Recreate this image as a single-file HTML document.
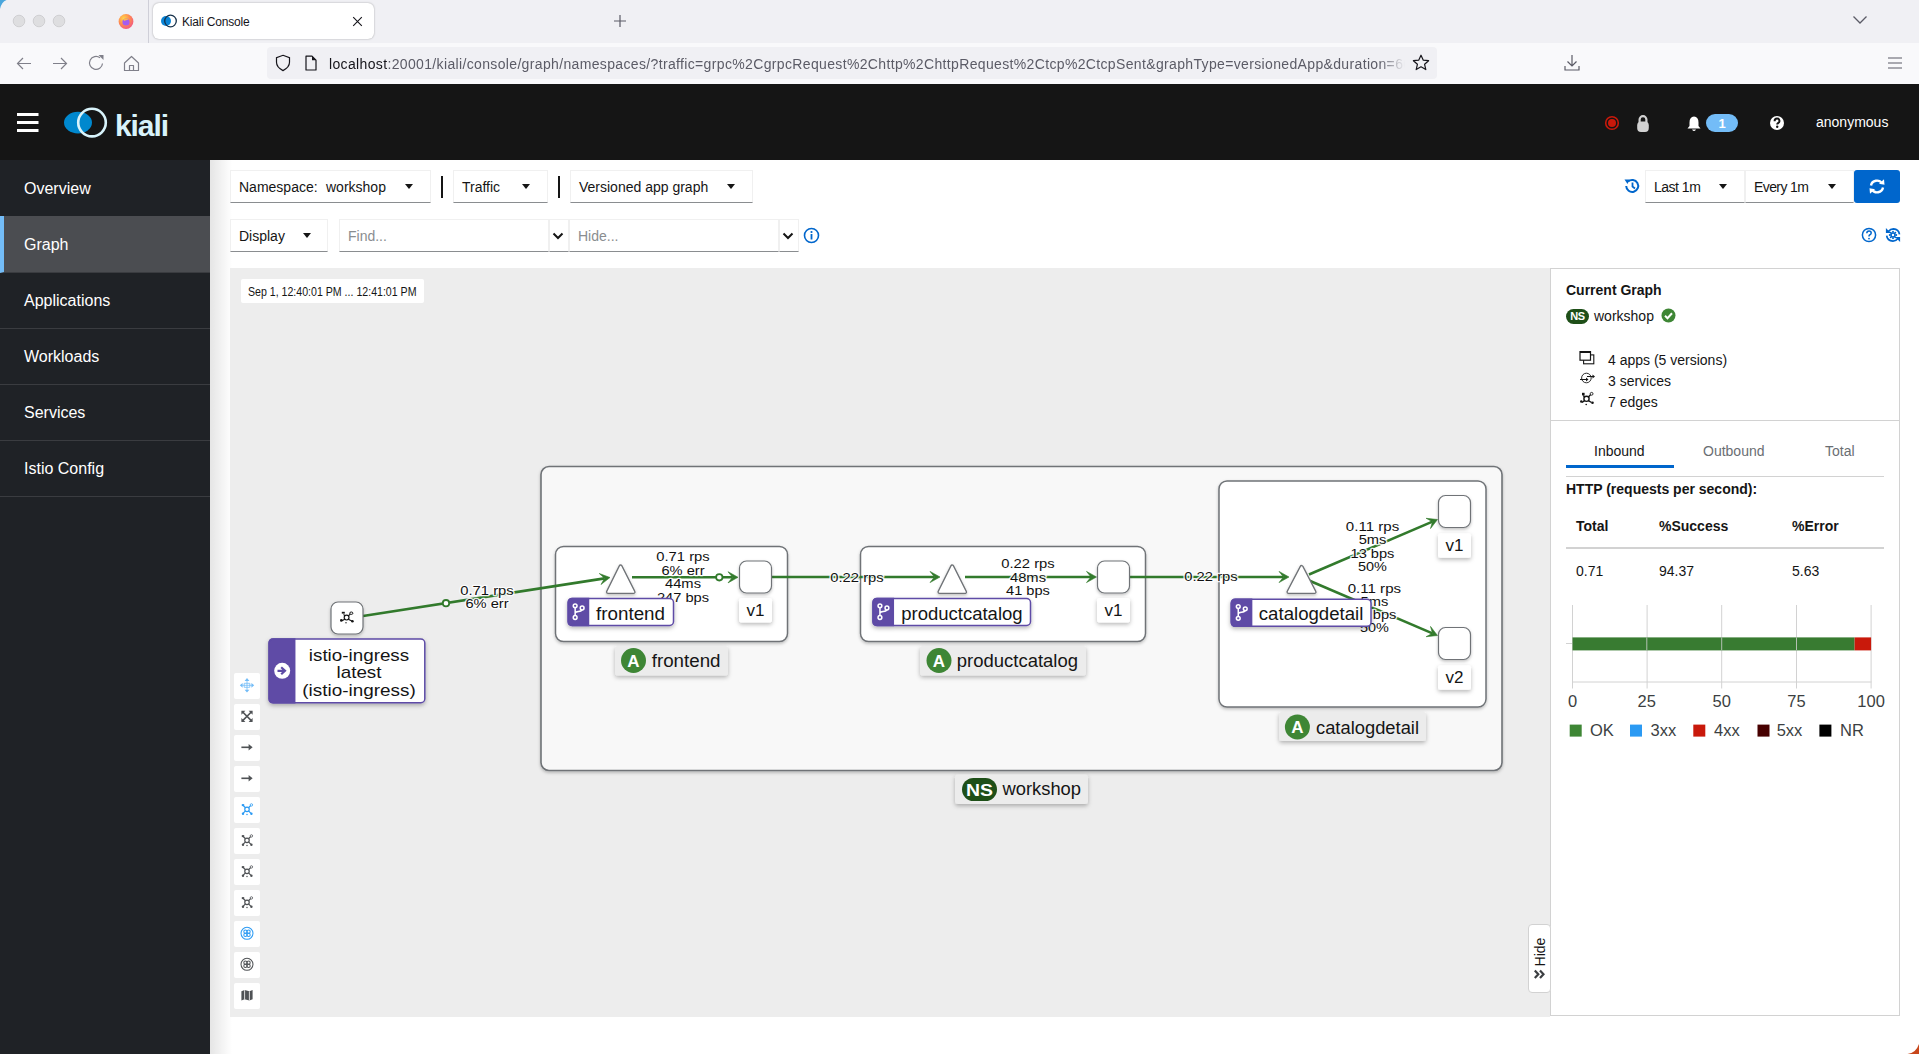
<!DOCTYPE html>
<html><head><meta charset="utf-8">
<style>
*{box-sizing:border-box;margin:0;padding:0}
html,body{width:1919px;height:1054px;overflow:hidden;background:#fff;font-family:"Liberation Sans",sans-serif;color:#151515}
.a{position:absolute}
#tabbar{left:0;top:0;width:1919px;height:43px;background:#f0f0f4}
#navbar{left:0;top:43px;width:1919px;height:41px;background:#f9f9fb}
#mast{left:0;top:84px;width:1919px;height:76px;background:#151515}
#side{left:0;top:160px;width:210px;height:894px;background:#1f2226}
.nav{position:absolute;left:0;width:210px;height:57px;border-bottom:1px solid #3a3c40;color:#fff;font-size:16px;padding-left:24px;line-height:58px}
#main{left:210px;top:160px;width:1709px;height:894px;background:#fff}
.sel{position:absolute;height:33px;background:#fff;border:1px solid #f0f0f0;border-bottom:1px solid #8a8d90;font-size:14px;color:#151515;line-height:33px;padding-left:8px}
.caret{position:absolute;width:0;height:0;border-left:4.5px solid transparent;border-right:4.5px solid transparent;border-top:5px solid #151515;margin-top:-1px;margin-left:0.5px}
.vsep{position:absolute;width:2px;background:#151515}
</style></head><body>
<!-- browser chrome -->
<div id="tabbar" class="a">
  <svg class="a" style="left:0;top:0" width="160" height="43">
    <circle cx="19" cy="21" r="5.8" fill="#dedee0" stroke="#c9c9cc" stroke-width="0.8"/>
    <circle cx="39" cy="21" r="5.8" fill="#dedee0" stroke="#c9c9cc" stroke-width="0.8"/>
    <circle cx="59" cy="21" r="5.8" fill="#dedee0" stroke="#c9c9cc" stroke-width="0.8"/>
    <defs><radialGradient id="ffg" cx="0.35" cy="0.3" r="0.8"><stop offset="0" stop-color="#ffd84a"/><stop offset="0.5" stop-color="#ff8a50"/><stop offset="1" stop-color="#f0508a"/></radialGradient></defs>
    <circle cx="126" cy="21.5" r="7.4" fill="url(#ffg)"/>
    <circle cx="126" cy="22" r="3.6" fill="#a55cf0"/>
    <path d="M123 19.5Q126 17.5 128.5 20Q126 19.5 124.5 21Z" fill="#ffb84a"/>
    <line x1="148.5" y1="0" x2="148.5" y2="43" stroke="#cfcfd8" stroke-width="1"/>
  </svg>
  <div class="a" style="left:153px;top:3px;width:221px;height:36px;background:#fff;border-radius:6px;box-shadow:0 0 2px rgba(0,0,0,.35)"></div>
  <svg class="a" style="left:160px;top:13px" width="18" height="16">
    <circle cx="6" cy="8" r="5" fill="#0a84d6"/>
    <circle cx="10.5" cy="8" r="5.8" fill="none" stroke="#16314a" stroke-width="1.3"/>
  </svg>
  <div class="a" style="left:182px;top:15px;font-size:12px;color:#15141a;letter-spacing:-0.2px">Kiali Console</div>
  <svg class="a" style="left:352px;top:16px" width="12" height="12"><path d="M1.2 1.2L9.8 9.8M9.8 1.2L1.2 9.8" stroke="#15141a" stroke-width="1.1"/></svg>
  <svg class="a" style="left:613px;top:14px" width="14" height="14"><path d="M7 1V13M1 7H13" stroke="#5b5b66" stroke-width="1.2"/></svg>
  <svg class="a" style="left:1852px;top:15px" width="16" height="10"><path d="M1.5 1.5L8 8L14.5 1.5" fill="none" stroke="#5b5b66" stroke-width="1.3"/></svg>
</div>
<div id="navbar" class="a">
  <svg class="a" style="left:0;top:0" width="160" height="41">
    <path d="M17.5 20.5H31M23 15L17.5 20.5L23 26" fill="none" stroke="#80808a" stroke-width="1.2"/>
    <path d="M53 20.5H66.5M61 15L66.5 20.5L61 26" fill="none" stroke="#80808a" stroke-width="1.2"/>
    <path d="M102.5 20.5A6.5 6.5 0 1 1 100 14.8" fill="none" stroke="#80808a" stroke-width="1.2"/>
    <path d="M98.5 12L103.5 12L103.5 17Z" fill="#80808a"/>
    <path d="M124.5 20L131.5 13.5L138.5 20V27.5H124.5Z M129.5 27.5V22.5H133.5V27.5" fill="none" stroke="#80808a" stroke-width="1.2" stroke-linejoin="round"/>
  </svg>
  <div class="a" style="left:267px;top:4px;width:1170px;height:32px;background:#f0f0f4;border-radius:4px"></div>
  <svg class="a" style="left:272px;top:10px" width="50" height="22">
    <path d="M11 2.3L17.5 4.6V9.3Q17.5 14.3 11 17.6Q4.5 14.3 4.5 9.3V4.6Z" fill="none" stroke="#15141a" stroke-width="1.2"/>
    <path d="M34 3.2H40L44 7.2V17H34Z" fill="none" stroke="#15141a" stroke-width="1.2" stroke-linejoin="round"/>
    <path d="M40 3.2V7.2H44Z" fill="#15141a"/>
  </svg>
  <div class="a" id="url" style="left:329px;top:13px;font-size:14px;letter-spacing:0.35px;color:#5b5b66;white-space:nowrap;width:1076px;overflow:hidden;-webkit-mask-image:linear-gradient(to right,#000 1050px,transparent 1076px)"><span style="color:#15141a">localhost</span>:20001/kiali/console/graph/namespaces/?traffic=grpc%2CgrpcRequest%2Chttp%2ChttpRequest%2Ctcp%2CtcpSent&amp;graphType=versionedApp&amp;duration=60</div>
  <svg class="a" style="left:1411px;top:10px" width="20" height="20"><path d="M10 2.2L12.3 7.2L17.6 7.7L13.6 11.3L14.8 16.6L10 13.8L5.2 16.6L6.4 11.3L2.4 7.7L7.7 7.2Z" fill="none" stroke="#15141a" stroke-width="1.2" stroke-linejoin="round"/></svg>
  <svg class="a" style="left:1563px;top:10px" width="18" height="20"><path d="M9 2V13M4.5 8.5L9 13L13.5 8.5M2 13V17H16V13" fill="none" stroke="#5b5b66" stroke-width="1.2"/></svg>
  <svg class="a" style="left:1887px;top:13px" width="16" height="14"><path d="M1 2H15M1 7H15M1 12H15" stroke="#5b5b66" stroke-width="1.2"/></svg>
</div>
<!-- masthead -->
<div id="mast" class="a">
  <svg class="a" style="left:17px;top:29px" width="22" height="20"><rect x="0" y="0" width="21.5" height="3" fill="#fff"/><rect x="0" y="8" width="21.5" height="3" fill="#fff"/><rect x="0" y="16" width="21.5" height="3" fill="#fff"/></svg>
  <svg class="a" style="left:62px;top:22px" width="50" height="34">
    <ellipse cx="16" cy="16.6" rx="14" ry="10.8" fill="#0088ce"/>
    <circle cx="30" cy="16.6" r="13.8" fill="none" stroke="#d8f3fb" stroke-width="2.6"/>
  </svg>
  <div class="a" style="left:115px;top:25px;font-size:30px;font-weight:bold;color:#d8f3fb;letter-spacing:-1.1px">kiali</div>
</div>
<!-- sidebar -->
<div id="side" class="a">
  <div class="nav" style="top:0">Overview</div>
  <div class="nav" style="top:56px;background:#4b4d51;border-left:4px solid #73bcf7;padding-left:20px">Graph</div>
  <div class="nav" style="top:112px">Applications</div>
  <div class="nav" style="top:168px">Workloads</div>
  <div class="nav" style="top:224px">Services</div>
  <div class="nav" style="top:280px">Istio Config</div>
</div>
<div id="main" class="a">
  <div class="a" style="left:0;top:0;width:22px;height:894px;background:linear-gradient(to right,rgba(0,0,0,.10),rgba(0,0,0,0))"></div>
</div>
<!--GRAPH--><svg class="a" style="left:0;top:0" width="1919" height="1054" viewBox="0 0 1919 1054">
<defs>
<filter id="sh" x="-20%" y="-20%" width="140%" height="160%"><feDropShadow dx="0" dy="2" stdDeviation="2" flood-color="#000" flood-opacity="0.28"/></filter>
<filter id="sh2" x="-20%" y="-20%" width="140%" height="160%"><feDropShadow dx="0" dy="1.5" stdDeviation="1.5" flood-color="#000" flood-opacity="0.25"/></filter>
</defs>
<rect x="230" y="268" width="1320" height="749" fill="#ededed"/>
<rect x="241" y="279" width="183" height="24" rx="2" fill="#fff"/>
<text x="248" y="296" font-size="12" textLength="168.5" lengthAdjust="spacingAndGlyphs" fill="#151515">Sep 1, 12:40:01 PM ... 12:41:01 PM</text>
<rect x="541" y="466.5" width="961" height="304" rx="8" fill="#f8f8f8" stroke="#6f7377" stroke-width="1.6" filter="url(#sh2)"/>
<rect x="955" y="774.5" width="133" height="29.5" rx="3" fill="#ececec" filter="url(#sh)"/>
<rect x="962" y="778" width="35" height="23" rx="11.5" fill="#1e4f18"/>
<text x="979.5" y="795.5" font-size="16" font-weight="bold" fill="#fff" text-anchor="middle" textLength="27" lengthAdjust="spacingAndGlyphs">NS</text>
<text x="1002.5" y="795" font-size="17.5" fill="#151515" textLength="78.5" lengthAdjust="spacingAndGlyphs">workshop</text>
<rect x="555.5" y="546.5" width="232" height="95" rx="8" fill="#fff" stroke="#6f7377" stroke-width="1.5" filter="url(#sh2)"/>
<rect x="860.5" y="546.5" width="285" height="95" rx="8" fill="#fff" stroke="#6f7377" stroke-width="1.5" filter="url(#sh2)"/>
<rect x="1219" y="481" width="267" height="226" rx="8" fill="#fff" stroke="#6f7377" stroke-width="1.5" filter="url(#sh2)"/>
<rect x="615" y="646" width="113" height="29.5" rx="3" fill="#ececec" filter="url(#sh)"/>
<circle cx="633.5" cy="660.5" r="12.5" fill="#3e8635"/>
<text x="633.5" y="666.5" font-size="17" font-weight="bold" fill="#fff" text-anchor="middle">A</text>
<text x="651.7" y="667.0" font-size="17.5" fill="#151515" textLength="68.8" lengthAdjust="spacingAndGlyphs">frontend</text>
<rect x="920" y="646" width="166" height="29.5" rx="3" fill="#ececec" filter="url(#sh)"/>
<circle cx="939" cy="660.5" r="12.5" fill="#3e8635"/>
<text x="939" y="666.5" font-size="17" font-weight="bold" fill="#fff" text-anchor="middle">A</text>
<text x="956.8" y="667.0" font-size="17.5" fill="#151515" textLength="121.2" lengthAdjust="spacingAndGlyphs">productcatalog</text>
<rect x="1279" y="712" width="147" height="29" rx="3" fill="#ececec" filter="url(#sh)"/>
<circle cx="1297.4" cy="727" r="12.5" fill="#3e8635"/>
<text x="1297.4" y="733" font-size="17" font-weight="bold" fill="#fff" text-anchor="middle">A</text>
<text x="1316" y="733.5" font-size="17.5" fill="#151515" textLength="103" lengthAdjust="spacingAndGlyphs">catalogdetail</text>
<line x1="363" y1="616" x2="604.57" y2="578.35" stroke="#327a2c" stroke-width="2.6"/>
<path d="M610.00 577.50 L600.98 584.57 L604.57 578.35 L599.26 573.51Z" fill="#327a2c" stroke="#327a2c" stroke-width="0.6" stroke-linejoin="miter"/>
<circle cx="446" cy="603.2" r="3.2" fill="#fff" stroke="#327a2c" stroke-width="1.8"/>
<line x1="632" y1="577.3" x2="732.5" y2="577.3" stroke="#327a2c" stroke-width="2.6"/>
<path d="M738.00 577.30 L728.00 582.90 L732.50 577.30 L728.00 571.70Z" fill="#327a2c" stroke="#327a2c" stroke-width="0.6" stroke-linejoin="miter"/>
<circle cx="719.3" cy="577.3" r="3.2" fill="#fff" stroke="#327a2c" stroke-width="1.8"/>
<line x1="772" y1="577" x2="934.5" y2="577.0" stroke="#327a2c" stroke-width="2.6"/>
<path d="M940.00 577.00 L930.00 582.60 L934.50 577.00 L930.00 571.40Z" fill="#327a2c" stroke="#327a2c" stroke-width="0.6" stroke-linejoin="miter"/>
<line x1="965" y1="577" x2="1091.0" y2="577.0" stroke="#327a2c" stroke-width="2.6"/>
<path d="M1096.50 577.00 L1086.50 582.60 L1091.00 577.00 L1086.50 571.40Z" fill="#327a2c" stroke="#327a2c" stroke-width="0.6" stroke-linejoin="miter"/>
<line x1="1130" y1="577" x2="1283.5" y2="577.0" stroke="#327a2c" stroke-width="2.6"/>
<path d="M1289.00 577.00 L1279.00 582.60 L1283.50 577.00 L1279.00 571.40Z" fill="#327a2c" stroke="#327a2c" stroke-width="0.6" stroke-linejoin="miter"/>
<line x1="1309" y1="574.5" x2="1432.44" y2="521.66" stroke="#327a2c" stroke-width="2.6"/>
<path d="M1437.50 519.50 L1430.51 528.58 L1432.44 521.66 L1426.10 518.29Z" fill="#327a2c" stroke="#327a2c" stroke-width="0.6" stroke-linejoin="miter"/>
<line x1="1309" y1="580.5" x2="1432.44" y2="633.34" stroke="#327a2c" stroke-width="2.6"/>
<path d="M1437.50 635.50 L1426.10 636.71 L1432.44 633.34 L1430.51 626.42Z" fill="#327a2c" stroke="#327a2c" stroke-width="0.6" stroke-linejoin="miter"/>
<path d="M620.6 566.5 L633.5 592 L608 592 Z" fill="#fff" stroke="#6f7377" stroke-width="4.2" stroke-linejoin="round" filter="url(#sh2)"/>
<path d="M620.6 566.5 L633.5 592 L608 592 Z" fill="#fff" stroke="#fff" stroke-width="1.6" stroke-linejoin="round"/>
<path d="M952.2 566.5 L965 592 L939.5 592 Z" fill="#fff" stroke="#6f7377" stroke-width="4.2" stroke-linejoin="round" filter="url(#sh2)"/>
<path d="M952.2 566.5 L965 592 L939.5 592 Z" fill="#fff" stroke="#fff" stroke-width="1.6" stroke-linejoin="round"/>
<path d="M1301.6 567 L1314.5 592 L1288.5 592 Z" fill="#fff" stroke="#6f7377" stroke-width="4.2" stroke-linejoin="round" filter="url(#sh2)"/>
<path d="M1301.6 567 L1314.5 592 L1288.5 592 Z" fill="#fff" stroke="#fff" stroke-width="1.6" stroke-linejoin="round"/>
<rect x="739.5" y="561" width="32" height="32" rx="7" fill="#fff" stroke="#6f7377" stroke-width="1.2" filter="url(#sh2)"/>
<rect x="1097.5" y="561" width="32" height="32" rx="7" fill="#fff" stroke="#6f7377" stroke-width="1.2" filter="url(#sh2)"/>
<rect x="1438.5" y="495.5" width="32" height="32" rx="7" fill="#fff" stroke="#6f7377" stroke-width="1.2" filter="url(#sh2)"/>
<rect x="1438.5" y="627.5" width="32" height="32" rx="7" fill="#fff" stroke="#6f7377" stroke-width="1.2" filter="url(#sh2)"/>
<rect x="331" y="602" width="32" height="32" rx="7" fill="#fff" stroke="#6f7377" stroke-width="1.2" filter="url(#sh2)"/>
<rect x="739" y="598" width="33" height="24.5" rx="2.5" fill="#fff" filter="url(#sh)"/>
<text x="755.5" y="616" font-size="17" fill="#151515" text-anchor="middle" textLength="18" lengthAdjust="spacingAndGlyphs">v1</text>
<rect x="1097" y="598" width="33" height="24.5" rx="2.5" fill="#fff" filter="url(#sh)"/>
<text x="1113.5" y="616" font-size="17" fill="#151515" text-anchor="middle" textLength="18" lengthAdjust="spacingAndGlyphs">v1</text>
<rect x="1438" y="533.3" width="33" height="24.5" rx="2.5" fill="#fff" filter="url(#sh)"/>
<text x="1454.5" y="551.3" font-size="17" fill="#151515" text-anchor="middle" textLength="18" lengthAdjust="spacingAndGlyphs">v1</text>
<rect x="1438" y="665.3" width="33" height="24.5" rx="2.5" fill="#fff" filter="url(#sh)"/>
<text x="1454.5" y="683.3" font-size="17" fill="#151515" text-anchor="middle" textLength="18" lengthAdjust="spacingAndGlyphs">v2</text>
<text x="487" y="594.5" font-size="13" fill="#111" stroke="rgba(255,255,255,0.85)" stroke-width="2.6" paint-order="stroke" stroke-linejoin="round" text-anchor="middle" textLength="53.4" lengthAdjust="spacingAndGlyphs">0.71 rps</text>
<text x="487" y="608.2" font-size="13" fill="#111" stroke="rgba(255,255,255,0.85)" stroke-width="2.6" paint-order="stroke" stroke-linejoin="round" text-anchor="middle" textLength="43.2" lengthAdjust="spacingAndGlyphs">6% err</text>
<text x="683" y="561.0" font-size="13" fill="#111" stroke="rgba(255,255,255,0.85)" stroke-width="2.6" paint-order="stroke" stroke-linejoin="round" text-anchor="middle" textLength="53.4" lengthAdjust="spacingAndGlyphs">0.71 rps</text>
<text x="683" y="574.6" font-size="13" fill="#111" stroke="rgba(255,255,255,0.85)" stroke-width="2.6" paint-order="stroke" stroke-linejoin="round" text-anchor="middle" textLength="43.2" lengthAdjust="spacingAndGlyphs">6% err</text>
<text x="683" y="588.1" font-size="13" fill="#111" stroke="rgba(255,255,255,0.85)" stroke-width="2.6" paint-order="stroke" stroke-linejoin="round" text-anchor="middle" textLength="36" lengthAdjust="spacingAndGlyphs">44ms</text>
<text x="683" y="601.6" font-size="13" fill="#111" stroke="rgba(255,255,255,0.85)" stroke-width="2.6" paint-order="stroke" stroke-linejoin="round" text-anchor="middle" textLength="52.2" lengthAdjust="spacingAndGlyphs">247 bps</text>
<text x="857" y="581.6" font-size="13" fill="#111" stroke="rgba(255,255,255,0.85)" stroke-width="2.6" paint-order="stroke" stroke-linejoin="round" text-anchor="middle" textLength="53.4" lengthAdjust="spacingAndGlyphs">0.22 rps</text>
<text x="1028" y="568.1" font-size="13" fill="#111" stroke="rgba(255,255,255,0.85)" stroke-width="2.6" paint-order="stroke" stroke-linejoin="round" text-anchor="middle" textLength="53.4" lengthAdjust="spacingAndGlyphs">0.22 rps</text>
<text x="1028" y="581.6" font-size="13" fill="#111" stroke="rgba(255,255,255,0.85)" stroke-width="2.6" paint-order="stroke" stroke-linejoin="round" text-anchor="middle" textLength="36" lengthAdjust="spacingAndGlyphs">48ms</text>
<text x="1028" y="595.1" font-size="13" fill="#111" stroke="rgba(255,255,255,0.85)" stroke-width="2.6" paint-order="stroke" stroke-linejoin="round" text-anchor="middle" textLength="43.9" lengthAdjust="spacingAndGlyphs">41 bps</text>
<text x="1211" y="581.3000000000001" font-size="13" fill="#111" stroke="rgba(255,255,255,0.85)" stroke-width="2.6" paint-order="stroke" stroke-linejoin="round" text-anchor="middle" textLength="53.4" lengthAdjust="spacingAndGlyphs">0.22 rps</text>
<text x="1372.5" y="531.0" font-size="13" fill="#111" stroke="rgba(255,255,255,0.85)" stroke-width="2.6" paint-order="stroke" stroke-linejoin="round" text-anchor="middle" textLength="53.4" lengthAdjust="spacingAndGlyphs">0.11 rps</text>
<text x="1372.5" y="544.1" font-size="13" fill="#111" stroke="rgba(255,255,255,0.85)" stroke-width="2.6" paint-order="stroke" stroke-linejoin="round" text-anchor="middle" textLength="27.7" lengthAdjust="spacingAndGlyphs">5ms</text>
<text x="1372.5" y="557.6" font-size="13" fill="#111" stroke="rgba(255,255,255,0.85)" stroke-width="2.6" paint-order="stroke" stroke-linejoin="round" text-anchor="middle" textLength="43.9" lengthAdjust="spacingAndGlyphs">13 bps</text>
<text x="1372.5" y="571.1" font-size="13" fill="#111" stroke="rgba(255,255,255,0.85)" stroke-width="2.6" paint-order="stroke" stroke-linejoin="round" text-anchor="middle" textLength="28.9" lengthAdjust="spacingAndGlyphs">50%</text>
<text x="1374.4" y="593.3000000000001" font-size="13" fill="#111" stroke="rgba(255,255,255,0.85)" stroke-width="2.6" paint-order="stroke" stroke-linejoin="round" text-anchor="middle" textLength="53.4" lengthAdjust="spacingAndGlyphs">0.11 rps</text>
<text x="1374.4" y="606.1" font-size="13" fill="#111" stroke="rgba(255,255,255,0.85)" stroke-width="2.6" paint-order="stroke" stroke-linejoin="round" text-anchor="middle" textLength="27.7" lengthAdjust="spacingAndGlyphs">5ms</text>
<text x="1374.4" y="619.3000000000001" font-size="13" fill="#111" stroke="rgba(255,255,255,0.85)" stroke-width="2.6" paint-order="stroke" stroke-linejoin="round" text-anchor="middle" textLength="43.9" lengthAdjust="spacingAndGlyphs">13 bps</text>
<text x="1374.4" y="632.1" font-size="13" fill="#111" stroke="rgba(255,255,255,0.85)" stroke-width="2.6" paint-order="stroke" stroke-linejoin="round" text-anchor="middle" textLength="28.9" lengthAdjust="spacingAndGlyphs">50%</text>
<g filter="url(#sh)"><rect x="568.2" y="598.5" width="105.29999999999995" height="27.0" rx="4" fill="#fff" stroke="#5e4ba6" stroke-width="1.5"/>
<path d="M572.2 598.5 H588.5 V625.5 H572.2 Q568.2 625.5 568.2 621.5 V602.5 Q568.2 598.5 572.2 598.5Z" fill="#5e4ba6" stroke="#5e4ba6" stroke-width="1.5"/></g>
<g fill="none" stroke="#fff" stroke-width="1.5"><circle cx="575.15" cy="605.8" r="1.9"/><circle cx="575.15" cy="617.5" r="1.9"/><circle cx="582.15" cy="608.0" r="1.9"/><path d="M575.15 607.7 V615.6 M575.15 613.2 Q575.35 612.0 578.35 611.5 Q581.75 611.0 581.95 609.8"/></g>
<text x="596.1" y="619.5" font-size="17.5" fill="#151515" textLength="68.9" lengthAdjust="spacingAndGlyphs">frontend</text>
<g filter="url(#sh)"><rect x="873" y="598.5" width="157.5" height="27.0" rx="4" fill="#fff" stroke="#5e4ba6" stroke-width="1.5"/>
<path d="M877 598.5 H893.3 V625.5 H877 Q873 625.5 873 621.5 V602.5 Q873 598.5 877 598.5Z" fill="#5e4ba6" stroke="#5e4ba6" stroke-width="1.5"/></g>
<g fill="none" stroke="#fff" stroke-width="1.5"><circle cx="879.9499999999999" cy="605.8" r="1.9"/><circle cx="879.9499999999999" cy="617.5" r="1.9"/><circle cx="886.9499999999999" cy="608.0" r="1.9"/><path d="M879.9499999999999 607.7 V615.6 M879.9499999999999 613.2 Q880.15 612.0 883.15 611.5 Q886.55 611.0 886.75 609.8"/></g>
<text x="901.2" y="619.5" font-size="17.5" fill="#151515" textLength="121.4" lengthAdjust="spacingAndGlyphs">productcatalog</text>
<g filter="url(#sh)"><rect x="1231.3" y="599.3" width="139.70000000000005" height="27.0" rx="4" fill="#fff" stroke="#5e4ba6" stroke-width="1.5"/>
<path d="M1235.3 599.3 H1251.6 V626.3 H1235.3 Q1231.3 626.3 1231.3 622.3 V603.3 Q1231.3 599.3 1235.3 599.3Z" fill="#5e4ba6" stroke="#5e4ba6" stroke-width="1.5"/></g>
<g fill="none" stroke="#fff" stroke-width="1.5"><circle cx="1238.25" cy="606.5999999999999" r="1.9"/><circle cx="1238.25" cy="618.3" r="1.9"/><circle cx="1245.25" cy="608.8" r="1.9"/><path d="M1238.25 608.5 V616.4 M1238.25 614.0 Q1238.45 612.8 1241.45 612.3 Q1244.8500000000001 611.8 1245.05 610.5999999999999"/></g>
<text x="1258.8" y="620.3" font-size="17.5" fill="#151515" textLength="104.6" lengthAdjust="spacingAndGlyphs">catalogdetail</text>
<g filter="url(#sh)"><rect x="269.1" y="639.1" width="155.7" height="63.60000000000002" rx="4" fill="#fff" stroke="#5e4ba6" stroke-width="1.5"/>
<path d="M273.1 639.1 H294.70000000000005 V702.7 H273.1 Q269.1 702.7 269.1 698.7 V643.1 Q269.1 639.1 273.1 639.1Z" fill="#5e4ba6" stroke="#5e4ba6" stroke-width="1.5"/></g>
<circle cx="282.2" cy="670.8" r="8" fill="#fff"/><path d="M277.5 670.8H284M281.2 667.3L285 670.8L281.2 674.3" fill="none" stroke="#5e4ba6" stroke-width="2.2"/>
<text x="359" y="660.5" font-size="17" fill="#151515" text-anchor="middle" textLength="100.4" lengthAdjust="spacingAndGlyphs">istio-ingress</text>
<text x="359" y="677.6" font-size="17" fill="#151515" text-anchor="middle" textLength="45" lengthAdjust="spacingAndGlyphs">latest</text>
<text x="359" y="695.7" font-size="17" fill="#151515" text-anchor="middle" textLength="113.5" lengthAdjust="spacingAndGlyphs">(istio-ingress)</text>
<g fill="none" stroke="#151515" stroke-width="1.2"><circle cx="346.6" cy="617.6" r="2.4"/><path d="M344.9 615.9L343.6 614.4M348.3 615.9L350.2 614.2M344.9 619.3L342 620.6M348.3 619.3L351.8 621"/></g>
<g fill="#151515"><rect x="341.8" y="611.8" width="3" height="1.8"/><circle cx="341.3" cy="620.4" r="1.3"/><circle cx="352.4" cy="621.2" r="1.3"/><circle cx="346" cy="622.8" r="0.7"/></g>
<ellipse cx="351.3" cy="613.2" rx="1.6" ry="1.2" fill="none" stroke="#151515" stroke-width="1"/>
</svg><!--/GRAPH-->
<!-- graph toolbar -->
<div class="a" style="left:234px;top:673px;width:26px;height:26px;background:#fff;border-radius:2px"></div>
<div class="a" style="left:234px;top:704px;width:26px;height:26px;background:#fff;border-radius:2px"></div>
<div class="a" style="left:234px;top:735px;width:26px;height:26px;background:#fff;border-radius:2px"></div>
<div class="a" style="left:234px;top:766px;width:26px;height:26px;background:#fff;border-radius:2px"></div>
<div class="a" style="left:234px;top:797px;width:26px;height:26px;background:#fff;border-radius:2px"></div>
<div class="a" style="left:234px;top:828px;width:26px;height:26px;background:#fff;border-radius:2px"></div>
<div class="a" style="left:234px;top:859px;width:26px;height:26px;background:#fff;border-radius:2px"></div>
<div class="a" style="left:234px;top:890px;width:26px;height:26px;background:#fff;border-radius:2px"></div>
<div class="a" style="left:234px;top:921px;width:26px;height:26px;background:#fff;border-radius:2px"></div>
<div class="a" style="left:234px;top:952px;width:26px;height:26px;background:#fff;border-radius:2px"></div>
<div class="a" style="left:234px;top:983px;width:26px;height:26px;background:#fff;border-radius:2px"></div>
<svg class="a" style="left:234px;top:673px" width="26" height="26"><g transform="translate(13 12.3) scale(0.8) translate(-13 -13)"><g fill="#73bcf7"><path d="M13 4L16 7.5H10Z M13 22L10 18.5H16Z M4 13L7.5 10V16Z M22 13L18.5 16V10Z"/><g stroke="#73bcf7" stroke-width="1" fill="none"><path d="M13 7V19M7 13H19M9.5 10.5H16.5V15.5H9.5Z"/></g></g></g></svg>
<svg class="a" style="left:234px;top:704px" width="26" height="26"><g transform="translate(13 12.3) scale(0.8) translate(-13 -13)"><g stroke="#4f5255" stroke-width="2" fill="none"><path d="M7 7L19 19M19 7L7 19"/></g><g fill="#4f5255"><path d="M6 6H11L6 11Z M20 6V11L15 6Z M6 20V15L11 20Z M20 20H15L20 15Z"/></g></g></svg>
<svg class="a" style="left:234px;top:735px" width="26" height="26"><g transform="translate(13 12.3) scale(0.8) translate(-13 -13)"><g fill="#4f5255"><rect x="6" y="12" width="10" height="2"/><path d="M15 9L20 13L15 17Z"/></g></g></svg>
<svg class="a" style="left:234px;top:766px" width="26" height="26"><g transform="translate(13 12.3) scale(0.8) translate(-13 -13)"><g fill="#4f5255"><rect x="6" y="12" width="10" height="2"/><path d="M15 9L20 13L15 17Z"/></g></g></svg>
<svg class="a" style="left:234px;top:797px" width="26" height="26"><g transform="translate(13 12.3) scale(0.8) translate(-13 -13)"><g fill="none" stroke="#2b9af3" stroke-width="1.5"><circle cx="13" cy="13" r="2.8"/><path d="M10.8 10.8L8 8M15.2 10.8L17.5 8.5M10.8 15.2L8 18M15.2 15.2L18 18"/></g><g fill="#2b9af3"><rect x="6.5" y="6.5" width="3" height="2.5"/><circle cx="18.5" cy="7.5" r="1.5" fill="none" stroke="#2b9af3" stroke-width="1"/><circle cx="8" cy="18.5" r="1.5"/><circle cx="18.5" cy="18.5" r="1.5"/><circle cx="13" cy="19.5" r="0.9"/></g></g></svg>
<svg class="a" style="left:234px;top:828px" width="26" height="26"><g transform="translate(13 12.3) scale(0.8) translate(-13 -13)"><g fill="none" stroke="#4f5255" stroke-width="1.5"><circle cx="13" cy="13" r="2.8"/><path d="M10.8 10.8L8 8M15.2 10.8L17.5 8.5M10.8 15.2L8 18M15.2 15.2L18 18"/></g><g fill="#4f5255"><rect x="6.5" y="6.5" width="3" height="2.5"/><circle cx="18.5" cy="7.5" r="1.5" fill="none" stroke="#4f5255" stroke-width="1"/><circle cx="8" cy="18.5" r="1.5"/><circle cx="18.5" cy="18.5" r="1.5"/><circle cx="13" cy="19.5" r="0.9"/></g></g></svg>
<svg class="a" style="left:234px;top:859px" width="26" height="26"><g transform="translate(13 12.3) scale(0.8) translate(-13 -13)"><g fill="none" stroke="#4f5255" stroke-width="1.5"><circle cx="13" cy="13" r="2.8"/><path d="M10.8 10.8L8 8M15.2 10.8L17.5 8.5M10.8 15.2L8 18M15.2 15.2L18 18"/></g><g fill="#4f5255"><rect x="6.5" y="6.5" width="3" height="2.5"/><circle cx="18.5" cy="7.5" r="1.5" fill="none" stroke="#4f5255" stroke-width="1"/><circle cx="8" cy="18.5" r="1.5"/><circle cx="18.5" cy="18.5" r="1.5"/><circle cx="13" cy="19.5" r="0.9"/></g></g></svg>
<svg class="a" style="left:234px;top:890px" width="26" height="26"><g transform="translate(13 12.3) scale(0.8) translate(-13 -13)"><g fill="none" stroke="#4f5255" stroke-width="1.5"><circle cx="13" cy="13" r="2.8"/><path d="M10.8 10.8L8 8M15.2 10.8L17.5 8.5M10.8 15.2L8 18M15.2 15.2L18 18"/></g><g fill="#4f5255"><rect x="6.5" y="6.5" width="3" height="2.5"/><circle cx="18.5" cy="7.5" r="1.5" fill="none" stroke="#4f5255" stroke-width="1"/><circle cx="8" cy="18.5" r="1.5"/><circle cx="18.5" cy="18.5" r="1.5"/><circle cx="13" cy="19.5" r="0.9"/></g></g></svg>
<svg class="a" style="left:234px;top:921px" width="26" height="26"><g transform="translate(13 12.3) scale(0.8) translate(-13 -13)"><g fill="none" stroke="#2b9af3" stroke-width="1.3"><circle cx="13" cy="13" r="7.5"/><circle cx="11" cy="11" r="2"/><circle cx="15" cy="11" r="2"/><circle cx="11" cy="15" r="2"/><circle cx="15" cy="15" r="2"/></g></g></svg>
<svg class="a" style="left:234px;top:952px" width="26" height="26"><g transform="translate(13 12.3) scale(0.8) translate(-13 -13)"><g fill="none" stroke="#4f5255" stroke-width="1.3"><circle cx="13" cy="13" r="7.5"/><circle cx="11" cy="11" r="2"/><circle cx="15" cy="11" r="2"/><circle cx="11" cy="15" r="2"/><circle cx="15" cy="15" r="2"/></g></g></svg>
<svg class="a" style="left:234px;top:983px" width="26" height="26"><g transform="translate(13 12.3) scale(0.8) translate(-13 -13)"><path d="M6 8L10 6.5L16 8L20 6.5V18L16 19.5L10 18L6 19.5Z" fill="#4f5255"/><path d="M10 6.5V18M16 8V19.5" stroke="#fff" stroke-width="1"/></g></svg>
<!-- side panel -->
<div class="a" style="left:1550px;top:268px;width:350px;height:748px;background:#fff;border:1px solid #d2d2d2"></div>
<div class="a" style="left:1566px;top:282px;font-size:14px;font-weight:bold;color:#151515">Current Graph</div>
<div class="a" style="left:1566px;top:309px;width:23px;height:15px;border-radius:7.5px;background:#1e4f18;color:#fff;font-size:11px;font-weight:bold;text-align:center;line-height:15px;letter-spacing:-0.3px">NS</div>
<div class="a" style="left:1594px;top:308px;font-size:14px;color:#151515">workshop</div>
<svg class="a" style="left:1661px;top:308px" width="15" height="15"><circle cx="7.5" cy="7.5" r="7" fill="#3e8635"/><path d="M4 7.8L6.5 10.2L11 5.3" fill="none" stroke="#fff" stroke-width="2"/></svg>
<svg class="a" style="left:1574px;top:346px" width="24" height="64">
  <g fill="none" stroke="#151515" stroke-width="1.1"><rect x="9.6" y="8.9" width="10.2" height="8.9"/></g>
  <rect x="6" y="5.6" width="10.5" height="8.6" fill="#fff" stroke="#151515" stroke-width="1.2"/><rect x="6" y="5.2" width="10.5" height="1.8" fill="#151515"/>
  <g fill="none" stroke="#151515" stroke-width="0.9"><circle cx="12.4" cy="32" r="4.8"/></g>
  <g stroke="#151515" stroke-width="1.2"><path d="M6 33.5H12.5M13 30.5H19"/></g><g fill="#151515"><path d="M12 31.5L14.5 33.5L12 35.5Z M18.5 28.5L21 30.5L18.5 32.5Z"/></g>
  <g fill="none" stroke="#151515" stroke-width="1.4"><circle cx="12.5" cy="52.8" r="2.6"/><path d="M10.6 50.9L9.3 49.5M14.4 50.9L16.5 48.8M10.6 54.7L8 56.5M14.4 54.7L17.5 56.5"/></g>
  <g fill="#151515"><rect x="8" y="46.8" width="2.6" height="2.6"/><circle cx="7.3" cy="55.5" r="1.3"/><circle cx="18.5" cy="56.8" r="1.3"/><circle cx="12.2" cy="58.5" r="0.8"/></g>
  <circle cx="17.6" cy="47.8" r="1.4" fill="none" stroke="#151515" stroke-width="0.9"/>
</svg>
<div class="a" style="left:1608px;top:350px;font-size:14px;color:#151515;line-height:21px">4 apps (5 versions)<br>3 services<br>7 edges</div>
<div class="a" style="left:1551px;top:420px;width:348px;height:1px;background:#d2d2d2"></div>
<div class="a" style="left:1594px;top:443px;font-size:14px;color:#151515">Inbound</div>
<div class="a" style="left:1703px;top:443px;font-size:14px;color:#6a6e73">Outbound</div>
<div class="a" style="left:1825px;top:443px;font-size:14px;color:#6a6e73">Total</div>
<div class="a" style="left:1566px;top:476px;width:318px;height:1px;background:#d2d2d2"></div>
<div class="a" style="left:1566px;top:465px;width:108px;height:3px;background:#0066cc"></div>
<div class="a" style="left:1566px;top:481px;font-size:14px;font-weight:bold;color:#151515">HTTP (requests per second):</div>
<div class="a" style="left:1576px;top:518px;font-size:14px;font-weight:bold;color:#151515">Total</div>
<div class="a" style="left:1659px;top:518px;font-size:14px;font-weight:bold;color:#151515">%Success</div>
<div class="a" style="left:1792px;top:518px;font-size:14px;font-weight:bold;color:#151515">%Error</div>
<div class="a" style="left:1566px;top:547px;width:318px;height:2px;background:#d2d2d2"></div>
<div class="a" style="left:1576px;top:563px;font-size:14px;color:#151515">0.71</div>
<div class="a" style="left:1659px;top:563px;font-size:14px;color:#151515">94.37</div>
<div class="a" style="left:1792px;top:563px;font-size:14px;color:#151515">5.63</div>
<svg class="a" style="left:1550px;top:590px" width="350" height="160">
  <g stroke="#d2d2d2" stroke-width="1"><line x1="22.5" y1="15" x2="22.5" y2="98.5"/><line x1="97.1" y1="15" x2="97.1" y2="98.5"/><line x1="171.7" y1="15" x2="171.7" y2="98.5"/><line x1="246.5" y1="15" x2="246.5" y2="98.5"/><line x1="321.1" y1="15" x2="321.1" y2="98.5"/><line x1="22" y1="92" x2="321.5" y2="92"/><line x1="16" y1="53.5" x2="22.5" y2="53.5"/></g>
  <rect x="22.5" y="47.4" width="282.1" height="13" fill="#387b31"/>
  <rect x="304.6" y="47.4" width="16.5" height="13" fill="#c9190b"/>
  <g stroke="#d2d2d2" stroke-width="1" opacity="0.8"><line x1="96.8" y1="47.4" x2="96.8" y2="60.4"/><line x1="171.7" y1="47.4" x2="171.7" y2="60.4"/><line x1="246.5" y1="47.4" x2="246.5" y2="60.4"/></g>
  <g font-size="16.5" fill="#3c3f42" text-anchor="middle"><text x="22.5" y="116.7">0</text><text x="96.8" y="116.7">25</text><text x="171.7" y="116.7">50</text><text x="246.5" y="116.7">75</text><text x="321.1" y="116.7">100</text></g>
  <rect x="19.7" y="134.6" width="12" height="12" fill="#3e8635"/>
  <rect x="80" y="134.6" width="12" height="12" fill="#2b9af3"/>
  <rect x="143.3" y="134.6" width="12" height="12" fill="#c9190b"/>
  <rect x="207.5" y="134.6" width="12" height="12" fill="#470000"/>
  <rect x="269.4" y="134.6" width="12" height="12" fill="#000"/>
  <g font-size="16.5" fill="#3c3f42"><text x="40" y="146.4">OK</text><text x="100.6" y="146.4">3xx</text><text x="164" y="146.4">4xx</text><text x="226.7" y="146.4">5xx</text><text x="290" y="146.4">NR</text></g>
</svg>
<!-- hide tab -->
<div class="a" style="left:1528px;top:924px;width:23px;height:69px;background:#fff;border:1px solid #d2d2d2;border-radius:4px"></div>
<div class="a" style="left:1518px;top:942px;width:44px;height:20px;transform:rotate(-90deg);font-size:14px;color:#151515;text-align:center;line-height:20px">Hide</div>
<svg class="a" style="left:1533px;top:969px" width="13" height="11"><path d="M1.8 1.5L5.3 5.3L1.8 9.1M7 1.5L10.5 5.3L7 9.1" fill="none" stroke="#3c3f42" stroke-width="2.2"/></svg>
<!-- toolbar row 1 -->
<div class="sel" style="left:230px;top:170px;width:201px"><span>Namespace:</span><span style="position:absolute;left:95px">workshop</span><div class="caret" style="left:173px;top:14px"></div></div>
<div class="vsep" style="left:441px;top:176px;height:22px"></div>
<div class="sel" style="left:453px;top:170px;width:95px">Traffic<div class="caret" style="left:67px;top:14px"></div></div>
<div class="vsep" style="left:558px;top:176px;height:22px"></div>
<div class="sel" style="left:570px;top:170px;width:183px">Versioned app graph<div class="caret" style="left:155px;top:14px"></div></div>
<!-- toolbar row 2 -->
<div class="sel" style="left:230px;top:219px;width:98px">Display<div class="caret" style="left:71px;top:14px"></div></div>
<div class="sel" style="left:339px;top:219px;width:210px;color:#8a8d90">Find...</div>
<div class="sel" style="left:549px;top:219px;width:20px"><svg class="a" style="left:2px;top:12px" width="12" height="8"><path d="M1.5 1.5L6 6L10.5 1.5" fill="none" stroke="#151515" stroke-width="2"/></svg></div>
<div class="sel" style="left:569px;top:219px;width:210px;color:#8a8d90">Hide...</div>
<div class="sel" style="left:779px;top:219px;width:20px"><svg class="a" style="left:2px;top:12px" width="12" height="8"><path d="M1.5 1.5L6 6L10.5 1.5" fill="none" stroke="#151515" stroke-width="2"/></svg></div>
<svg class="a" style="left:803px;top:227px" width="17" height="17"><circle cx="8.5" cy="8.5" r="7" fill="none" stroke="#0066cc" stroke-width="1.6"/><circle cx="8.5" cy="5" r="1.1" fill="#0066cc"/><rect x="7.6" y="7" width="1.8" height="5.5" fill="#0066cc"/></svg>
<!-- right toolbar -->
<svg class="a" style="left:1623px;top:177px" width="18" height="18"><path d="M3.2 9A6 6 0 1 0 5 4.6" fill="none" stroke="#0066cc" stroke-width="2"/><path d="M1.5 2.5L6.5 2.5L4.5 7Z" fill="#0066cc"/><path d="M9.5 5.5V9.5L12 11.5" fill="none" stroke="#0066cc" stroke-width="1.8"/></svg>
<div class="sel" style="left:1645px;top:170px;width:100px;letter-spacing:-0.5px">Last 1m<div class="caret" style="left:72px;top:14px"></div></div>
<div class="sel" style="left:1745px;top:170px;width:109px;letter-spacing:-0.6px">Every 1m<div class="caret" style="left:81px;top:14px"></div></div>
<div class="a" style="left:1854px;top:170px;width:46px;height:33px;background:#0066cc;border-radius:3px"><svg class="a" style="left:14px;top:8px" width="18" height="17"><path d="M3 7.5A6 6 0 0 1 14 5.5M15 9.5A6 6 0 0 1 4 11.5" fill="none" stroke="#fff" stroke-width="2.4"/><path d="M11 5.8L16.5 6.8L16 1.2Z M7 11.2L1.5 10.2L2 15.8Z" fill="#fff"/></svg></div>
<svg class="a" style="left:1861px;top:227px" width="16" height="16"><circle cx="8" cy="8" r="6.6" fill="none" stroke="#0066cc" stroke-width="1.5"/><path d="M5.8 6.2Q5.8 3.9 8 3.9Q10.2 3.9 10.2 6Q10.2 7.3 8.6 8Q8 8.3 8 9.5" fill="none" stroke="#0066cc" stroke-width="1.5"/><circle cx="8" cy="11.6" r="0.9" fill="#0066cc"/></svg>
<svg class="a" style="left:1885px;top:227px" width="16" height="16"><g fill="none" stroke="#0066cc" stroke-width="1.7"><path d="M3.2 4.6Q5.5 1.9 8.5 1.9Q13.6 2.3 14.5 7.3"/><path d="M1.7 8.6Q2.2 13.6 8 14.2Q11 14.1 12.6 11.8"/></g><circle cx="8" cy="8" r="2" fill="none" stroke="#0066cc" stroke-width="1.6"/><g fill="#0066cc"><path d="M0.9 0.9V5.9H5.8Z M15.1 15.1V10.1H10.2Z"/><circle cx="11.30" cy="8.00" r="0.95"/><circle cx="10.33" cy="10.33" r="0.95"/><circle cx="8.00" cy="11.30" r="0.95"/><circle cx="5.67" cy="10.33" r="0.95"/><circle cx="4.70" cy="8.00" r="0.95"/><circle cx="5.67" cy="5.67" r="0.95"/><circle cx="8.00" cy="4.70" r="0.95"/><circle cx="10.33" cy="5.67" r="0.95"/></g></svg>
<!-- masthead right -->
<svg class="a" style="left:1603px;top:114px" width="18" height="18"><circle cx="9" cy="9" r="6.3" fill="none" stroke="#c9190b" stroke-width="1.6"/><circle cx="9" cy="9" r="4" fill="#c9190b"/></svg>
<svg class="a" style="left:1635px;top:114px" width="16" height="19"><path d="M4.6 8.5V5.6A3.4 3.4 0 0 1 11.4 5.6V8.5" fill="none" stroke="#d2d2d2" stroke-width="2.2"/><path d="M2.2 11.5Q2.2 7.5 6 7.5H10Q13.8 7.5 13.8 11.5V14Q13.8 18 10 18H6Q2.2 18 2.2 14Z" fill="#d2d2d2"/></svg>
<svg class="a" style="left:1686px;top:115px" width="16" height="18"><path d="M8 1.5Q12.5 2 12.5 7.5V11L14.5 13.5H1.5L3.5 11V7.5Q3.5 2 8 1.5Z" fill="#fff"/><path d="M6 14.5Q8 17.5 10 14.5Z" fill="#fff"/></svg>
<div class="a" style="left:1706px;top:114px;width:32px;height:18px;border-radius:9px;background:#73bcf7;color:#fff;font-size:13px;font-weight:bold;text-align:center;line-height:19px">1</div>
<svg class="a" style="left:1769px;top:115px" width="16" height="16"><circle cx="8" cy="8" r="7" fill="#fff"/><path d="M5.6 6.2Q5.6 3.6 8 3.6Q10.5 3.6 10.5 6Q10.5 7.3 9 8.1Q8.2 8.6 8.2 9.6" fill="none" stroke="#151515" stroke-width="2"/><circle cx="8.2" cy="11.8" r="1.2" fill="#151515"/></svg>
<div class="a" style="left:1816px;top:114px;font-size:14px;color:#fff">anonymous</div>
<!-- corners -->
<svg class="a" style="left:0;top:0" width="12" height="12"><path d="M0 0H6.5Q1.5 2 0 9Z" fill="#4aa6dc"/></svg>
<svg class="a" style="left:1905px;top:1042px" width="14" height="12"><path d="M14 12H2.5Q11 11 14 2Z" fill="#c8461a"/></svg>
</body></html>
